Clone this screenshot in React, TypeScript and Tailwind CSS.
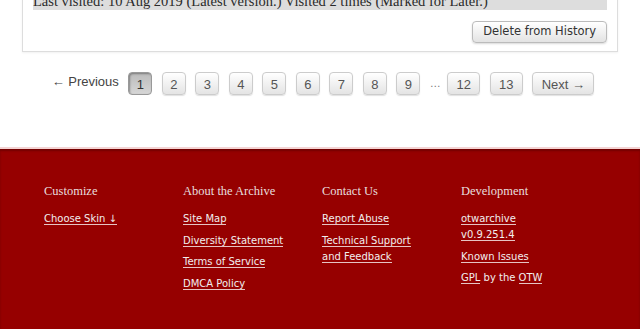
import React from "react";

const serif = { fontFamily: '"Liberation Serif", Georgia, serif' };
const verdana = { fontFamily: '"DejaVu Sans", Verdana, sans-serif' };
const lucida = { fontFamily: '"Liberation Sans", Arial, sans-serif' };

const pages = ["1", "2", "3", "4", "5", "6", "7", "8", "9", "…", "12", "13"];

function PageBox({ label }: { label: string }) {
  if (label === "…") {
    return <span className="w-[8px] text-center text-[11px] text-[#777]">…</span>;
  }
  const current = label === "1";
  const wide = label.length > 1;
  return (
    <span
      className={`flex h-[23px] items-center justify-center rounded-[4px] border pt-[2px] text-[13px] ${
        wide ? "w-[33px]" : "w-[24px]"
      } ${
        current
          ? "border-[#999] bg-gradient-to-b from-[#bbb] to-[#d6d6d6] text-[#333] shadow-[inset_1px_1px_2px_rgba(0,0,0,0.35)]"
          : "border-[#ccc] bg-gradient-to-b from-white to-[#e4e4e4] text-[#555] shadow-[0_1px_1px_rgba(0,0,0,0.12)]"
      }`}
    >
      {label}
    </span>
  );
}

function FooterLink({ children }: { children: React.ReactNode }) {
  return <span className="border-b border-[#e6c4c4] text-[#f2eeee]">{children}</span>;
}

function FooterColumn({ title, items }: { title: string; items: React.ReactNode[] }) {
  return (
    <div className="w-[139px]">
      <h4 style={serif} className="text-[12.5px] leading-[18px] text-[#e8dede]">
        {title}
      </h4>
      <ul style={verdana} className="mt-[11px] flex flex-col gap-[5.5px] text-[10px] leading-[16px]">
        {items.map((item, i) => (
          <li key={i}>{item}</li>
        ))}
      </ul>
    </div>
  );
}

export default function App() {
  return (
    <div className="h-[329px] w-[640px] overflow-hidden bg-white">
      {/* reading history entry, cut off at the top */}
      <div className="mx-[22px] -mt-[18.5px] border border-[#ddd] px-[10px] pt-[10px] pb-[8px] shadow-[0_1px_2px_rgba(0,0,0,0.06)]">
        <div style={serif} className="h-[17px] bg-[#ddd] text-[14.5px] leading-[17px] whitespace-nowrap text-[#2a2a2a]">
          Last visited: 10 Aug 2019 (Latest version.) Visited 2 times (Marked for Later.)
        </div>
        <div className="mt-[11.5px] flex justify-end">
          <button
            style={verdana}
            className="h-[22px] rounded-[4px] border border-[#bbb] bg-gradient-to-b from-white to-[#e3e3e3] px-[10px] text-[11.5px] text-[#333] shadow-[0_1px_2px_rgba(0,0,0,0.15)]"
          >
            Delete from History
          </button>
        </div>
      </div>

      {/* pagination */}
      <div style={lucida} className="mt-[20px] flex items-center justify-center gap-[9.5px] pl-[6px]">
        <span className="-mt-[4px] text-[13px] text-[#444]">← Previous</span>
        {pages.map((p, i) => (
          <PageBox key={i} label={p} />
        ))}
        <span className="flex h-[23px] w-[62px] items-center justify-center rounded-[4px] border border-[#ccc] bg-gradient-to-b from-white to-[#e4e4e4] pt-[2px] text-[13px] text-[#555] shadow-[0_1px_1px_rgba(0,0,0,0.12)]">
          Next →
        </span>
      </div>

      {/* footer */}
      <div className="mt-[52px] border-t-[2px] border-[#f4d4d4]">
        <div className="h-[200px] bg-[#960000] pt-[33px] pl-[44px] shadow-[inset_0_2px_2px_rgba(80,0,0,0.5)]">
          <div className="flex">
            <FooterColumn
              title="Customize"
              items={[<FooterLink>Choose Skin ↓</FooterLink>]}
            />
            <FooterColumn
              title="About the Archive"
              items={[
                <FooterLink>Site Map</FooterLink>,
                <FooterLink>Diversity Statement</FooterLink>,
                <FooterLink>Terms of Service</FooterLink>,
                <FooterLink>DMCA Policy</FooterLink>,
              ]}
            />
            <FooterColumn
              title="Contact Us"
              items={[
                <FooterLink>Report Abuse</FooterLink>,
                <span className="block w-[100px]">
                  <FooterLink>Technical Support and Feedback</FooterLink>
                </span>,
              ]}
            />
            <FooterColumn
              title="Development"
              items={[
                <span className="block w-[80px]">
                  <FooterLink>otwarchive v0.9.251.4</FooterLink>
                </span>,
                <FooterLink>Known Issues</FooterLink>,
                <span className="text-[#f2eeee]">
                  <FooterLink>GPL</FooterLink> by the <FooterLink>OTW</FooterLink>
                </span>,
              ]}
            />
          </div>
        </div>
      </div>
    </div>
  );
}
